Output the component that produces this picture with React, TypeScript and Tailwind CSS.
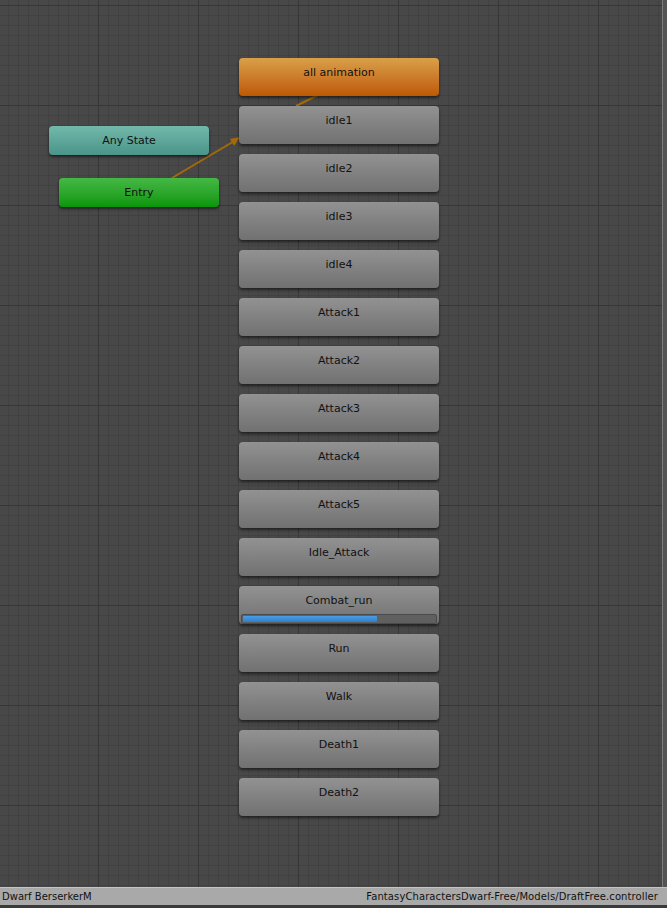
import React from "react";

const states = [
  "idle1",
  "idle2",
  "idle3",
  "idle4",
  "Attack1",
  "Attack2",
  "Attack3",
  "Attack4",
  "Attack5",
  "Idle_Attack",
  "Combat_run",
  "Run",
  "Walk",
  "Death1",
  "Death2",
];

function Node({ label, progress }: { label: string; progress?: number }) {
  return (
    <div className="relative h-[38px] w-[200px] rounded-[4px] bg-gradient-to-b from-[#929292] to-[#717171] shadow-[0_2px_3px_rgba(0,0,0,0.55)] pt-[8px] text-center text-[11px] leading-[14px] text-[#111]">
      {label}
      {progress !== undefined && (
        <div className="absolute left-[2px] right-[2px] top-[28px] h-[10px] rounded-[2px] border border-[#4a4a4a] bg-[#606060] p-[1px]">
          <div
            className="h-full rounded-[1px] bg-gradient-to-b from-[#4a9ee6] to-[#2f7fc8]"
            style={{ width: `${progress}%` }}
          />
        </div>
      )}
    </div>
  );
}

export default function App() {
  return (
    <div className="flex h-[908px] w-[667px] flex-col overflow-hidden bg-[#3a3a3a] font-['DejaVu_Sans',sans-serif]">
      <div className="relative h-[887px] w-full bg-[#484848] [background-image:linear-gradient(to_right,#363636_1px,transparent_1px),linear-gradient(to_bottom,#363636_1px,transparent_1px),linear-gradient(to_right,#414141_1px,transparent_1px),linear-gradient(to_bottom,#414141_1px,transparent_1px)] [background-size:100px_100px,100px_100px,10px_10px,10px_10px] [background-position:98px_5px,98px_5px,8px_5px,8px_5px]">
        <svg className="absolute left-0 top-0" width="667" height="887">
          <line x1="172" y1="178" x2="236" y2="140" stroke="#a56a08" strokeWidth="2" />
          <polygon points="240,137 230,139 234,146" fill="#a56a08" />
          <line x1="296" y1="106" x2="318" y2="95" stroke="#a56a08" strokeWidth="2" />
        </svg>

        <div className="absolute left-[49px] top-[126px] flex h-[29px] w-[160px] items-center justify-center rounded-[4px] bg-gradient-to-b from-[#72b9aa] to-[#4a948a] pt-[1px] text-[11px] text-[#111] shadow-[0_2px_3px_rgba(0,0,0,0.55)]">
          Any State
        </div>
        <div className="absolute left-[59px] top-[178px] flex h-[29px] w-[160px] items-center justify-center rounded-[4px] bg-gradient-to-b from-[#44b844] to-[#069606] pt-[1px] text-[11px] text-[#111] shadow-[0_2px_3px_rgba(0,0,0,0.55)]">
          Entry
        </div>

        <div className="absolute left-[239px] top-[58px] flex flex-col gap-[10px]">
          <div className="h-[38px] w-[200px] rounded-[4px] bg-gradient-to-b from-[#d9a048] to-[#bd5800] pt-[8px] text-center text-[11px] leading-[14px] text-[#111] shadow-[0_2px_3px_rgba(0,0,0,0.55)]">
            all animation
          </div>
          {states.map((s) => (
            <Node key={s} label={s} progress={s === "Combat_run" ? 70 : undefined} />
          ))}
        </div>

        <div className="absolute right-0 top-0 h-full w-[5px] border-l border-[#7c7c7c] bg-[#545454]" />
      </div>
      <div className="flex h-[18px] w-full items-center justify-between border-t border-[#c4c4c4] bg-[#a9a9a9] pl-[2px] pr-[9px] text-[10px] text-[#111]">
        <span>Dwarf BerserkerM</span>
        <span className="tracking-[0.1px]">FantasyCharactersDwarf-Free/Models/DraftFree.controller</span>
      </div>
    </div>
  );
}
